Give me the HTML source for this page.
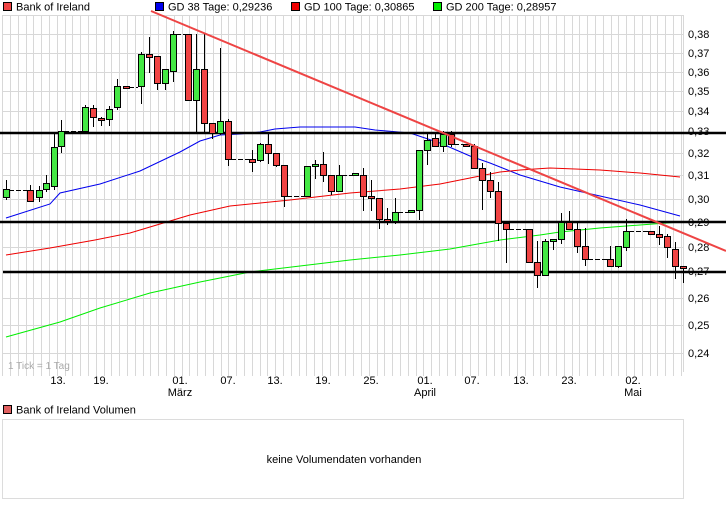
<!DOCTYPE html>
<html><head><meta charset="utf-8"><style>
html,body{margin:0;padding:0;background:#fff;width:726px;height:508px;overflow:hidden}
svg{display:block;font-family:"Liberation Sans",Arial,sans-serif}
</style></head><body>
<svg width="726" height="508" viewBox="0 0 726 508" xmlns="http://www.w3.org/2000/svg">
<!-- legend -->
<rect x="3.5" y="2.5" width="8" height="8" fill="#f04444" stroke="#000"/>
<text x="16" y="10.5" font-size="11">Bank of Ireland</text>
<rect x="155.5" y="2.5" width="8" height="8" fill="#0000ee" stroke="#000"/>
<text x="168" y="10.5" font-size="11">GD 38 Tage: 0,29236</text>
<rect x="291.5" y="2.5" width="8" height="8" fill="#ee0000" stroke="#000"/>
<text x="304" y="10.5" font-size="11">GD 100 Tage: 0,30865</text>
<rect x="433.5" y="2.5" width="8" height="8" fill="#00ee00" stroke="#000"/>
<text x="446" y="10.5" font-size="11">GD 200 Tage: 0,28957</text>

<!-- vertical grid + ticks -->
<g id="vl" stroke="#d8d8d8" stroke-width="1">
<path d="M2.5 15V376M10.5 15V376M18.5 15V376M26.5 15V376M33.5 15V376M41.5 15V376M49.5 15V376M57.5 15V376M65.5 15V376M72.5 15V376M80.5 15V376M88.5 15V376M96.5 15V376M104.5 15V376M111.5 15V376M119.5 15V376M127.5 15V376M135.5 15V376M143.5 15V376M150.5 15V376M158.5 15V376M166.5 15V376M174.5 15V376M182.5 15V376M189.5 15V376M197.5 15V376M205.5 15V376M213.5 15V376M221.5 15V376M228.5 15V376M236.5 15V376M244.5 15V376M252.5 15V376M260.5 15V376M267.5 15V376M275.5 15V376M283.5 15V376M291.5 15V376M299.5 15V376M306.5 15V376M314.5 15V376M322.5 15V376M330.5 15V376M338.5 15V376M345.5 15V376M353.5 15V376M361.5 15V376M369.5 15V376M377.5 15V376M384.5 15V376M392.5 15V376M400.5 15V376M408.5 15V376M416.5 15V376M423.5 15V376M431.5 15V376M439.5 15V376M447.5 15V376M455.5 15V376M462.5 15V376M470.5 15V376M478.5 15V376M486.5 15V376M494.5 15V376M501.5 15V376M509.5 15V376M517.5 15V376M525.5 15V376M533.5 15V376M540.5 15V376M548.5 15V376M556.5 15V376M564.5 15V376M572.5 15V376M579.5 15V376M587.5 15V376M595.5 15V376M603.5 15V376M611.5 15V376M618.5 15V376M626.5 15V376M634.5 15V376M642.5 15V376M650.5 15V376M657.5 15V376M665.5 15V376M673.5 15V376M681.5 15V376M683.5 15V372"/>
</g>
<g stroke="#d8d8d8" stroke-width="1">
<line x1="2" y1="15.5" x2="684" y2="15.5"/>
<line x1="2" y1="34.5" x2="684" y2="34.5"/>
<line x1="2" y1="53.5" x2="684" y2="53.5"/>
<line x1="2" y1="72.5" x2="684" y2="72.5"/>
<line x1="2" y1="91.5" x2="684" y2="91.5"/>
<line x1="2" y1="111.5" x2="684" y2="111.5"/>
<line x1="2" y1="153.5" x2="684" y2="153.5"/>
<line x1="2" y1="175.5" x2="684" y2="175.5"/>
<line x1="2" y1="199.5" x2="684" y2="199.5"/>
<line x1="2" y1="247.5" x2="684" y2="247.5"/>
<line x1="2" y1="298.5" x2="684" y2="298.5"/>
<line x1="2" y1="325.5" x2="684" y2="325.5"/>
<line x1="2" y1="353.5" x2="684" y2="353.5"/>
</g>
<text x="8" y="369" font-size="10" fill="#aaa">1 Tick = 1 Tag</text>

<!-- y labels -->
<g font-size="11" fill="#000">
<text x="688" y="38">0,38</text><text x="688" y="57">0,37</text><text x="688" y="76">0,36</text>
<text x="688" y="95">0,35</text><text x="688" y="115">0,34</text><text x="688" y="135">0,33</text>
<text x="688" y="157">0,32</text><text x="688" y="179">0,31</text><text x="688" y="203">0,30</text>
<text x="688" y="226">0,29</text><text x="688" y="251">0,28</text><text x="688" y="275">0,27</text>
<text x="688" y="302">0,26</text><text x="688" y="329">0,25</text><text x="688" y="357">0,24</text>
</g>
<!-- x labels -->
<g font-size="11" text-anchor="middle">
<text x="58" y="384">13.</text><text x="101" y="384">19.</text><text x="180" y="384">01.</text>
<text x="228" y="384">07.</text><text x="275" y="384">13.</text><text x="323" y="384">19.</text>
<text x="371" y="384">25.</text><text x="425" y="384">01.</text><text x="472" y="384">07.</text>
<text x="521" y="384">13.</text><text x="569" y="384">23.</text><text x="633" y="384">02.</text>
<text x="180" y="396">März</text><text x="425" y="396">April</text><text x="633" y="396">Mai</text>
</g>

<!-- moving averages -->
<polyline fill="none" stroke="#0000ee" stroke-width="1" points="6,218 50,204 60,193 100,184 140,171 180,152 200,141 220,135 240,134 260,132 275,129 300,127 355,127 375,130 410,133 440,143 470,156 490,163 520,175 560,187 600,196 640,205 680,216"/>
<polyline fill="none" stroke="#ee0000" stroke-width="1" points="6,255 50,248 95,240 130,233 160,224 190,215 230,206 290,200 350,193 400,189 440,184 470,178 500,172 520,170 550,168 600,170 640,173 680,177"/>
<polyline fill="none" stroke="#00ee00" stroke-width="1" points="6,337 60,322 100,308 150,293 200,282 250,272 300,266 350,260 400,255 450,249 500,240 540,235 560,232 600,228 640,225 680,222"/>

<!-- horizontal black lines -->
<g stroke="#000" stroke-width="2.5">
<line x1="0" y1="133" x2="726" y2="133"/>
<line x1="0" y1="222" x2="726" y2="222"/>
<line x1="3" y1="272" x2="726" y2="272"/>
</g>

<!-- gap dashes -->
<g stroke="#000" stroke-width="1" stroke-dasharray="5,2">
<line x1="9" y1="190.5" x2="27" y2="190.5"/>
<line x1="64" y1="131.5" x2="82" y2="131.5"/>
<line x1="129" y1="87.5" x2="138" y2="87.5"/>
<line x1="176" y1="34.5" x2="185" y2="34.5"/>
<line x1="231" y1="159.5" x2="249" y2="159.5"/>
<line x1="287" y1="196.5" x2="304" y2="196.5"/>
<line x1="342" y1="175.5" x2="352" y2="175.5"/>
<line x1="398" y1="212.5" x2="408" y2="212.5"/>
<line x1="454" y1="144.5" x2="463" y2="144.5"/>
<line x1="509" y1="229.5" x2="526" y2="229.5"/>
<line x1="588" y1="259.5" x2="607" y2="259.5"/>
<line x1="629" y1="231.5" x2="648" y2="231.5"/>
</g>

<!-- candles -->
<g stroke="#000" stroke-width="1">
<path d="M6.5 180V200M30.5 185V202M39.5 186V202M46.5 175V192M54.5 134V190M61.5 120V153M85.5 105V131M93.5 105V127M101.5 117V126M109.5 106V126M117.5 79V110M141.5 52V104M149.5 37V73M157.5 56V90M165.5 69V90M173.5 31V82M196.5 34V132M204.5 34V133M212.5 123V139M220.5 48V135M228.5 119V166M252.5 150V172M260.5 143V162M268.5 132V164M276.5 153V167M284.5 165V207M315.5 160V179M323.5 152V182M331.5 175V195M339.5 165V192M363.5 168V211M371.5 180V211M379.5 198V229M387.5 208V225M395.5 198V224M419.5 150V220M427.5 133V165M435.5 133V146M443.5 131V152M451.5 131V147M474.5 144V168M482.5 163V210M490.5 172V198M498.5 182V241M506.5 223V263M537.5 241V288M545.5 239V275M553.5 239V250M561.5 213V244M569.5 211V226M577.5 221V253M585.5 228V266M610.5 246V266M618.5 246V268M626.5 219V251M659.5 226V245M667.5 234V258M675.5 242V279M683.5 266V283"/>
</g>
<g stroke="#000" stroke-width="1" fill="#44e844">
<rect x="3.5" y="189.5" width="6" height="8"/>
<rect x="36.5" y="190.5" width="6" height="7"/>
<rect x="43.5" y="183.5" width="6" height="6"/>
<rect x="51.5" y="147.5" width="6" height="39"/>
<rect x="58.5" y="131.5" width="6" height="15"/>
<rect x="82.5" y="107.5" width="6" height="24"/>
<rect x="106.5" y="109.5" width="6" height="10"/>
<rect x="114.5" y="86.5" width="6" height="21"/>
<rect x="138.5" y="54.5" width="6" height="32"/>
<rect x="162.5" y="69.5" width="6" height="14"/>
<rect x="170.5" y="34.5" width="6" height="37"/>
<rect x="193.5" y="69.5" width="6" height="31"/>
<rect x="217.5" y="121.5" width="6" height="12"/>
<rect x="257.5" y="144.5" width="6" height="16"/>
<rect x="304.5" y="166.5" width="6" height="30"/>
<rect x="312.5" y="164.5" width="6" height="2"/>
<rect x="336.5" y="175.5" width="6" height="16"/>
<rect x="352.5" y="173.5" width="6" height="2"/>
<rect x="392.5" y="212.5" width="6" height="9"/>
<rect x="408.5" y="210.5" width="6" height="2"/>
<rect x="416.5" y="150.5" width="6" height="60"/>
<rect x="424.5" y="140.5" width="6" height="10"/>
<rect x="440.5" y="134.5" width="6" height="12"/>
<rect x="542.5" y="241.5" width="6" height="34"/>
<rect x="550.5" y="239.5" width="6" height="2"/>
<rect x="558.5" y="222.5" width="6" height="17"/>
<rect x="615.5" y="246.5" width="6" height="20"/>
<rect x="623.5" y="231.5" width="6" height="16"/>
</g>
<g stroke="#000" stroke-width="1" fill="#f04444">
<rect x="27.5" y="190.5" width="6" height="11"/>
<rect x="90.5" y="108.5" width="6" height="9"/>
<rect x="98.5" y="118.5" width="6" height="2"/>
<rect x="123.5" y="86.5" width="6" height="2"/>
<rect x="146.5" y="54.5" width="6" height="3"/>
<rect x="154.5" y="56.5" width="6" height="27"/>
<rect x="185.5" y="34.5" width="6" height="66"/>
<rect x="201.5" y="69.5" width="6" height="54"/>
<rect x="209.5" y="123.5" width="6" height="10"/>
<rect x="225.5" y="121.5" width="6" height="38"/>
<rect x="249.5" y="159.5" width="6" height="3"/>
<rect x="265.5" y="144.5" width="6" height="9"/>
<rect x="273.5" y="153.5" width="6" height="12"/>
<rect x="281.5" y="165.5" width="6" height="31"/>
<rect x="320.5" y="164.5" width="6" height="11"/>
<rect x="328.5" y="175.5" width="6" height="16"/>
<rect x="360.5" y="175.5" width="6" height="21"/>
<rect x="368.5" y="196.5" width="6" height="2"/>
<rect x="376.5" y="198.5" width="6" height="21"/>
<rect x="384.5" y="219.5" width="6" height="2"/>
<rect x="432.5" y="138.5" width="6" height="8"/>
<rect x="448.5" y="134.5" width="6" height="10"/>
<rect x="463.5" y="144.5" width="6" height="2"/>
<rect x="471.5" y="146.5" width="6" height="22"/>
<rect x="479.5" y="168.5" width="6" height="12"/>
<rect x="487.5" y="180.5" width="6" height="11"/>
<rect x="495.5" y="191.5" width="6" height="32"/>
<rect x="503.5" y="223.5" width="6" height="6"/>
<rect x="526.5" y="229.5" width="6" height="33"/>
<rect x="534.5" y="262.5" width="6" height="13"/>
<rect x="566.5" y="222.5" width="6" height="7"/>
<rect x="574.5" y="229.5" width="6" height="17"/>
<rect x="582.5" y="246.5" width="6" height="13"/>
<rect x="607.5" y="259.5" width="6" height="7"/>
<rect x="648.5" y="231.5" width="6" height="3"/>
<rect x="656.5" y="234.5" width="6" height="3"/>
<rect x="664.5" y="236.5" width="6" height="11"/>
<rect x="672.5" y="249.5" width="6" height="17"/>
<rect x="680.5" y="266.5" width="6" height="2"/>
</g>

<!-- trend line -->
<line x1="151" y1="11" x2="726" y2="251" stroke="#ee4444" stroke-width="2"/>

<!-- volume -->
<rect x="3.5" y="405.5" width="8" height="8" fill="#e06060" stroke="#000"/>
<text x="16" y="413.5" font-size="11">Bank of Ireland Volumen</text>
<rect x="2.5" y="419.5" width="681" height="79" fill="#fff" stroke="#dcdcdc"/>
<text x="344" y="463" font-size="11" text-anchor="middle">keine Volumendaten vorhanden</text>
</svg>
</body></html>
